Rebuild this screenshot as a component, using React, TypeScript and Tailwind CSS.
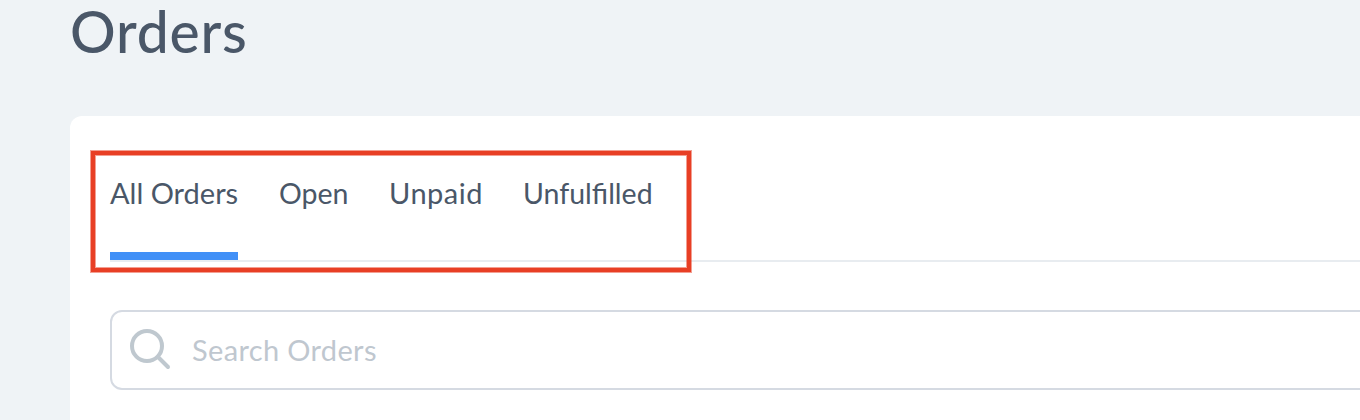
import { useState } from 'react'

const tabs = [
  { label: 'All Orders', size: 'w-[128px] text-[29px]' },
  { label: 'Open', size: 'w-[69px] text-[28.5px]' },
  { label: 'Unpaid', size: 'w-[93px] text-[29px] tracking-[0.5px]' },
  { label: 'Unfulfilled', size: 'w-[129px] text-[28.5px]' },
]

const SearchIcon = () => (
  <svg className="-mt-0.5 ml-4 h-11 w-11 shrink-0" viewBox="0 0 44 44" fill="none" stroke="#bfc8cf" strokeWidth={4} strokeLinecap="round">
    <circle cx="19" cy="19" r="15" />
    <path d="M30 30L40 40" />
  </svg>
)

export default function App() {
  const [active, setActive] = useState('All Orders')
  const [query, setQuery] = useState('')

  return (
    <div className="h-[420px] w-full overflow-hidden bg-[#eff3f6] pl-[70px] font-['Lato',sans-serif] text-[#4a5768]">
      <h1 className="flex h-[116px] items-start text-[57px] leading-[62px] font-medium tracking-[0.8px]">Orders</h1>

      <main className="h-[304px] rounded-tl-xl bg-white pl-10">
        <nav className="relative flex h-[146px] gap-[41px] border-b-2 border-[#e8ecf0] pt-[58px]">
          {tabs.map((tab) => (
            <button
              key={tab.label}
              onClick={() => setActive(tab.label)}
              className={`${tab.size} h-[86px] border-b-8 pb-12 text-left leading-[38px] whitespace-nowrap ${active === tab.label ? 'border-[#4190f7]' : 'border-transparent'}`}
            >
              {tab.label}
            </button>
          ))}
          {/* Highlight around the filter tabs */}
          <div className="pointer-events-none absolute top-[35px] -left-[19px] h-[121px] w-[600px] border-4 border-[#e83f25] shadow-[0_0_0_1px_#e83f2580,inset_0_0_0_1px_#e83f2580]" />
        </nav>

        <label className="mt-12 -mr-4 flex h-20 items-center rounded-xl border-2 border-[#d5dae2]">
          <SearchIcon />
          <input
            value={query}
            onChange={(e) => setQuery(e.target.value)}
            placeholder="Search Orders"
            className="ml-5 w-full text-[29px] tracking-[0.35px] outline-none placeholder:text-[#bfc7cf]"
          />
        </label>
      </main>
    </div>
  )
}
